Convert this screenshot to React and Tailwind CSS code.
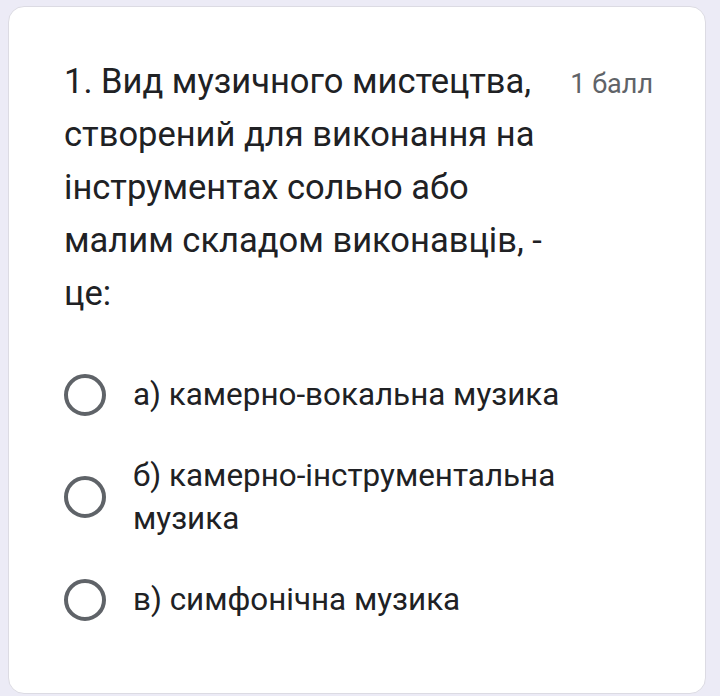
export default function App() {
  const options = [
    "а) камерно-вокальна музика",
    "б) камерно-інструментальна музика",
    "в) симфонічна музика",
  ];

  return (
    <div className="w-[720px] h-[696px] bg-[#ecebf6] pt-[6px] pl-[8px] overflow-hidden" style={{ fontFamily: "Roboto, 'Noto Sans', sans-serif" }}>
      <div className="w-[698px] h-[688px] bg-white rounded-[16px] border border-[#dcdbe3] pl-[55px] pr-[52px] pt-[48px]">
        {/* question */}
        <div className="flex items-start justify-between">
          <div className="w-[495px] text-[34.5px] leading-[53px] text-[#202124]">
            1. Вид музичного мистецтва, створений для виконання на інструментах сольно або малим складом виконавців, - це:
          </div>
          <div className="mt-[9px] text-[27px] leading-[40px] text-[#5f6368]">1 балл</div>
        </div>

        {/* options */}
        <div className="mt-[53px] flex flex-col gap-[38px]">
          {options.map((o) => (
            <div key={o} className="flex items-center">
              <div className="w-[42px] h-[42px] rounded-full border-[4px] border-[#5f6368] shrink-0" />
              <div className="ml-[27px] w-[455px] text-[31.4px] leading-[43px] text-[#202124]">{o}</div>
            </div>
          ))}
        </div>
      </div>
    </div>
  );
}
